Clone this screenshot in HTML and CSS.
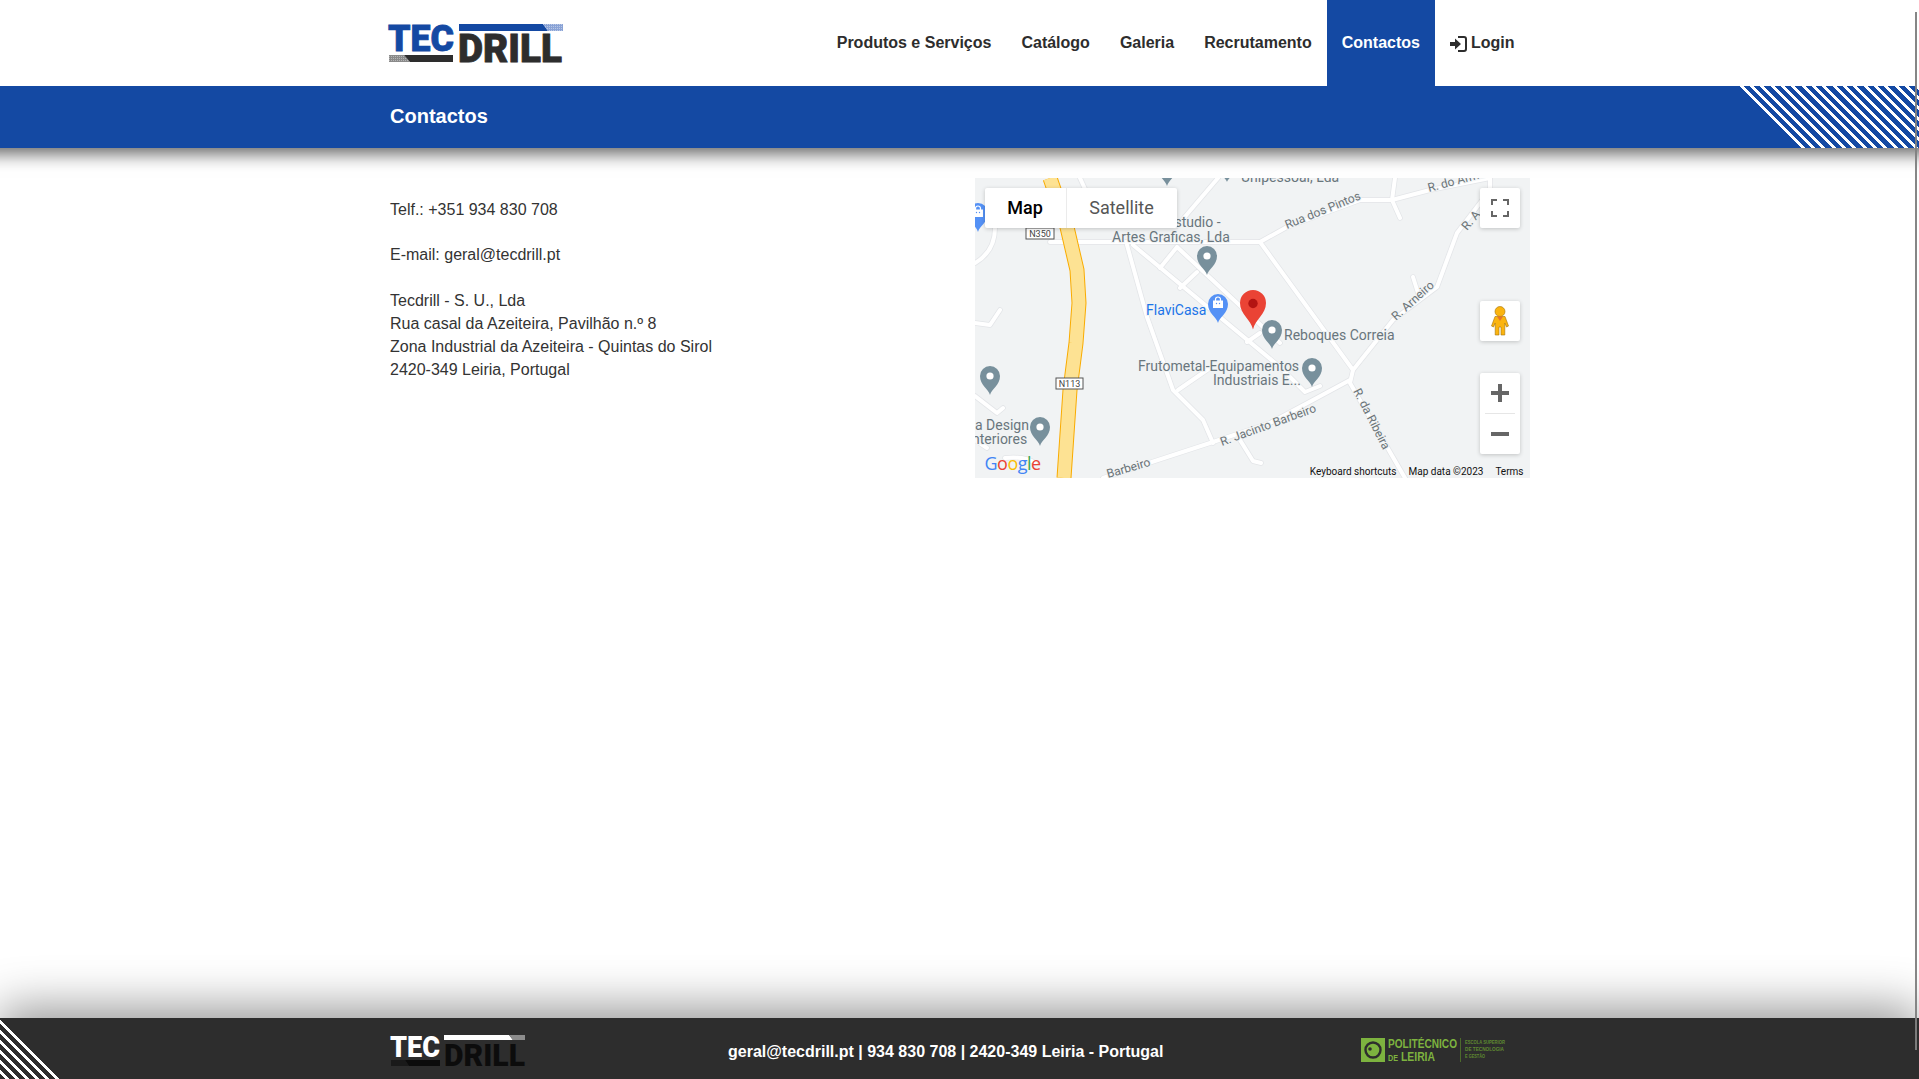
FILE: index.html
```html
<!DOCTYPE html>
<html lang="pt">
<head>
  <meta charset="UTF-8">
  <meta name="viewport" content="width=device-width, initial-scale=1.0">
  <title>Contactos - Tecdrill</title>
  <link rel="stylesheet" href="styles.css">
</head>
<body>

  <!-- Header -->
  <header class="site-header">
    <div class="container header-row">
      <a href="#" class="logo">
        <svg width="174" height="38" viewBox="0 0 174 38">
          <defs>
            <pattern id="hatchBlue" width="2" height="2" patternUnits="userSpaceOnUse">
              <rect width="2" height="2" fill="#8aa3d6"/>
              <rect width="1" height="1" fill="#b9c8e6"/>
            </pattern>
            <pattern id="hatchGrey" width="2" height="2" patternUnits="userSpaceOnUse">
              <rect width="2" height="2" fill="#8a8a8a"/>
              <rect width="1" height="1" fill="#b5b5b5"/>
            </pattern>
          </defs>
          <text class="logo-tec" x="-1" y="27" textLength="66" lengthAdjust="spacingAndGlyphs">TEC</text>
          <polygon points="70,0 154,0 159,7 70,7" fill="#1449a3"/>
          <polygon points="154,0 174,0 174,7 159,7" fill="url(#hatchBlue)"/>
          <text class="logo-drill" x="69" y="38" textLength="104" lengthAdjust="spacingAndGlyphs">DRILL</text>
          <polygon points="0,31 15,31 21,38 0,38" fill="url(#hatchGrey)"/>
          <polygon points="15,31 64,31 64,38 21,38" fill="#2d2d2d"/>
        </svg>
      </a>
      <nav class="main-nav">
        <a href="#">Produtos e Serviços</a>
        <a href="#">Catálogo</a>
        <a href="#">Galeria</a>
        <a href="#">Recrutamento</a>
        <a href="#" class="active">Contactos</a>
        <a href="#" class="login">
          <svg width="17" height="16" viewBox="0 0 17 16">
            <path d="M0 6H5V2.500L11 8 5 13.500V10H0z" fill="#2d2d2d"/>
            <path d="M8 1h6Q16 1 16 3v10q0 2-2 2H8" fill="none" stroke="#2d2d2d" stroke-width="2"/>
          </svg>
          Login
        </a>
      </nav>
    </div>
  </header>

  <!-- Page title -->
  <div class="title-bar">
    <div class="container">
      <h1>Contactos</h1>
    </div>
    <div class="title-stripes"></div>
  </div>

  <!-- Content -->
  <main class="container content-row">
    <div class="contact-info">
      <p>Telf.: +351 934 830 708</p>
      <p>E-mail: geral@tecdrill.pt</p>
      <p>Tecdrill - S. U., Lda<br>
      Rua casal da Azeiteira, Pavilhão n.º 8<br>
      Zona Industrial da Azeiteira - Quintas do Sirol<br>
      2420-349 Leiria, Portugal</p>
    </div>

    <div class="map">
      <svg class="map-canvas" width="555" height="300" viewBox="0 0 555 300">
        <defs>
          <path id="pin" d="M0 0C-1.500-6-10-10-10-19A10 10 0 0 1 10-19C10-10 1.500-6 0 0Z"/>
          <g id="placePin">
            <use href="#pin" fill="#78909c"/>
            <circle cy="-19" r="3.600" fill="#fff"/>
          </g>
          <g id="shopPin">
            <use href="#pin" fill="#5491f5"/>
            <path d="M-5-22.500h10v7.500h-10z" fill="#fff"/>
            <path d="M-2.500-22v-1.500a2.500 2.500 0 0 1 5 0v1.500" fill="none" stroke="#fff" stroke-width="1.200"/>
            <circle cx="-1.500" cy="-19.500" r=".7" fill="#5491f5"/>
            <circle cx="1.500" cy="-19.500" r=".7" fill="#5491f5"/>
          </g>
        </defs>

        <!-- minor roads -->
        <g class="roads-casing">
          <path d="M75 64H285L312 49 385 22H417L455 12 515 0"/>
          <path d="M417 22L425 40M417 22L420 0"/>
          <path d="M285 64L378 192 375 205 430 300"/>
          <path d="M378 192L418 142 462 109 482 55 515 12V0"/>
          <path d="M438 99L443 115"/>
          <path d="M128 300L235 265 295 245 338 222 375 202"/>
          <path d="M152 67L172 139 198 212 228 242 238 265"/>
          <path d="M158 67L305 189 330 214 345 208"/>
          <path d="M202 69L305 165"/>
          <path d="M185 90L202 69M205 110L222 94M272 164L285 155"/>
          <path d="M105 0L115 22M243 0L202 48"/>
          <path d="M0 85C12 78 20 68 20 50M0 145L15 147 25 132"/>
          <path d="M0 218L22 235 28 230M0 262L12 270M265 262L278 283 286 285"/>
          <path d="M203 212L235 190"/>
          <path d="M30 280Q50 278 60 285"/>
        </g>
        <g class="roads">
          <path d="M75 64H285L312 49 385 22H417L455 12 515 0"/>
          <path d="M417 22L425 40M417 22L420 0"/>
          <path d="M285 64L378 192 375 205 430 300"/>
          <path d="M378 192L418 142 462 109 482 55 515 12V0"/>
          <path d="M438 99L443 115"/>
          <path d="M128 300L235 265 295 245 338 222 375 202"/>
          <path d="M152 67L172 139 198 212 228 242 238 265"/>
          <path d="M158 67L305 189 330 214 345 208"/>
          <path d="M202 69L305 165"/>
          <path d="M185 90L202 69M205 110L222 94M272 164L285 155"/>
          <path d="M105 0L115 22M243 0L202 48"/>
          <path d="M0 85C12 78 20 68 20 50M0 145L15 147 25 132"/>
          <path d="M0 218L22 235 28 230M0 262L12 270M265 262L278 283 286 285"/>
          <path d="M203 212L235 190"/>
          <path d="M30 280Q50 278 60 285"/>
        </g>

        <!-- N113 -->
        <path class="main-road-edge" d="M75 0L92 49 102 92 104 125 101 165 95 212 89 300"/>
        <path class="main-road" d="M75 0L92 49 102 92 104 125 101 165 95 212 89 300"/>
        <g class="shield">
          <rect x="51" y="50" width="28" height="11"/>
          <text x="65" y="59">N350</text>
          <rect x="81" y="200" width="27" height="11"/>
          <text x="94.500" y="209">N113</text>
        </g>

        <!-- labels -->
        <g class="map-label">
          <text x="192" y="49">estudio -</text>
          <text x="137" y="64">Artes Graficas, Lda</text>
          <text x="163" y="193">Frutometal-Equipamentos</text>
          <text x="238" y="207">Industriais E...</text>
          <text x="309" y="162">Reboques Correia</text>
          <text x="0" y="252">a Design</text>
          <text x="-3" y="266">nteriores</text>
          <text x="266" y="4">Unipessoal, Lda</text>
        </g>
        <text class="map-label-blue" x="171" y="137">FlaviCasa</text>
        <g class="road-label">
          <text transform="translate(312 51) rotate(-22)">Rua dos Pintos</text>
          <text transform="translate(454 14) rotate(-15)">R. do Armaz</text>
          <text transform="translate(492 53) rotate(-50)">R. A</text>
          <text transform="translate(421 143) rotate(-42)">R. Arneiro</text>
          <text transform="translate(378 213) rotate(63)">R. da Ribeira</text>
          <text transform="translate(247 268) rotate(-20)">R. Jacinto Barbeiro</text>
          <text transform="translate(133 300) rotate(-16)">Barbeiro</text>
        </g>

        <!-- pins -->
        <use href="#placePin" x="192" y="8"/>
        <use href="#placePin" transform="translate(252 4) scale(.5)"/>
        <use href="#placePin" x="232" y="97"/>
        <use href="#placePin" x="297" y="171"/>
        <use href="#placePin" x="337" y="209"/>
        <use href="#placePin" x="15" y="217"/>
        <use href="#placePin" x="65" y="268"/>
        <use href="#shopPin" x="243" y="145"/>
        <use href="#shopPin" x="3" y="54"/>
        <g class="marker">
          <path d="M278 151.500C276 141.500 265 136.500 265 125A13 13 0 0 1 291 125C291 136.500 280 141.500 278 151.500Z" fill="#ea4335"/>
          <circle cx="278" cy="125.500" r="4.700" fill="#b31412"/>
        </g>
      </svg>

      <div class="map-type">
        <span class="map-type-btn selected">Map</span>
        <span class="map-type-btn">Satellite</span>
      </div>
      <div class="map-btn fullscreen-btn">
        <svg width="18" height="18" viewBox="0 0 18 18">
          <path d="M1 6V1H6M12 1H17V6M17 12V17H12M6 17H1V12" fill="none" stroke="#666" stroke-width="2"/>
        </svg>
      </div>
      <div class="map-btn pegman-btn">
        <svg width="18" height="30" viewBox="0 0 18 30">
          <circle cx="9" cy="5.500" r="5" fill="#fbb40f" stroke="#a5740c" stroke-width=".6"/>
          <path d="M4 10.500H14L17.500 20 15.500 21 13.800 17V29H10V21H8V29H4.200V17L2.500 21 .5 20Z" fill="#fbb40f" stroke="#a5740c" stroke-width=".6"/>
          <path d="M6 10.500H12L9 15Z" fill="#e8742a"/>
        </svg>
      </div>
      <div class="zoom-box">
        <div class="zoom-btn">
          <svg width="18" height="18" viewBox="0 0 18 18"><path d="M0 9H18M9 0V18" stroke="#666" stroke-width="4"/></svg>
        </div>
        <div class="zoom-line"></div>
        <div class="zoom-btn">
          <svg width="18" height="18" viewBox="0 0 18 18"><path d="M0 9H18" stroke="#666" stroke-width="4"/></svg>
        </div>
      </div>
      <div class="google-mark"><span class="g-blue">G</span><span class="g-red">o</span><span class="g-yellow">o</span><span class="g-blue">g</span><span class="g-green">l</span><span class="g-red">e</span></div>
      <div class="map-attr">
        <span>Keyboard shortcuts</span>
        <span>Map data ©2023</span>
        <span>Terms</span>
      </div>
    </div>
  </main>

  <!-- Footer -->
  <footer class="site-footer">
    <div class="footer-stripes"></div>
    <div class="container footer-row">
      <svg class="footer-logo" width="134" height="31" viewBox="0 0 134 31">
        <text class="foot-tec" x="-1" y="22" textLength="50" lengthAdjust="spacingAndGlyphs">TEC</text>
        <polygon points="53,0 118,0 122,5 53,5" fill="#fff"/>
        <polygon points="118,0 134,0 134,5 122,5" fill="#8c8c8c"/>
        <text class="foot-drill" x="53" y="31" textLength="81" lengthAdjust="spacingAndGlyphs">DRILL</text>
        <polygon points="0,25 14,25 18,31 0,31" fill="#1a1a1a"/>
        <polygon points="14,25 49,25 49,31 18,31" fill="#0c0c0c"/>
      </svg>
      <p class="footer-text">geral@tecdrill.pt | 934 830 708 | 2420-349 Leiria - Portugal</p>
      <svg class="school-logo" width="146" height="26" viewBox="0 0 146 26">
        <rect x="1" y="1" width="24" height="24" fill="#7db33f"/>
        <circle cx="13" cy="13" r="7.500" fill="none" stroke="#2d2d2d" stroke-width="2.400"/>
        <circle cx="10" cy="12" r="1.800" fill="#2d2d2d"/>
        <text class="school-big" x="28" y="11" textLength="69" lengthAdjust="spacingAndGlyphs">POLITÉCNICO</text>
        <text class="school-small" x="28" y="24" textLength="10" lengthAdjust="spacingAndGlyphs">DE</text>
        <text class="school-big" x="41" y="24" textLength="34" lengthAdjust="spacingAndGlyphs">LEIRIA</text>
        <rect x="100" y="1" width="1" height="24" fill="#4c6a2c"/>
        <text class="school-tiny" x="105" y="7" textLength="40" lengthAdjust="spacingAndGlyphs">ESCOLA SUPERIOR</text>
        <text class="school-tiny" x="105" y="14" textLength="39" lengthAdjust="spacingAndGlyphs">DE TECNOLOGIA</text>
        <text class="school-tiny" x="105" y="21" textLength="20" lengthAdjust="spacingAndGlyphs">E GESTÃO</text>
      </svg>
    </div>
  </footer>

  <!-- Overlay scrollbar -->
  <div class="scroll-thumb"></div>

</body>
</html>
```

FILE: styles.css
```css
html, body {
  height: 100%;
}

body {
  margin: 0;
  font-family: "Liberation Sans", Arial, sans-serif;
  font-size: 16px;
  line-height: 1.42857;
  color: #333;
  background-color: white;
  display: flex;
  flex-direction: column;
  overflow: hidden;
}

.container {
  box-sizing: border-box;
  width: 1140px;
  margin: 0 auto;
  padding-left: 0.5px;
}

/* Header */
.site-header {
  position: relative;
  z-index: 2;
  height: 86px;
  flex: none;
  background-color: white;
}

.header-row {
  display: flex;
  justify-content: space-between;
  align-items: stretch;
  height: 86px;
}

.logo {
  display: block;
  margin-top: 24px;
  margin-left: -1px;
  height: 38px;
}

.logo svg {
  display: block;
  overflow: visible;
}

.logo-tec {
  font-family: Roboto, sans-serif;
  font-weight: 900;
  font-size: 37px;
  fill: #1449a3;
  stroke: #1449a3;
  stroke-width: 0.8px;
}

.logo-drill {
  font-family: Roboto, sans-serif;
  font-weight: 900;
  font-size: 39px;
  fill: #2d2d2d;
  stroke: #2d2d2d;
  stroke-width: 0.8px;
}

.main-nav {
  display: flex;
}

.main-nav a {
  display: flex;
  align-items: center;
  padding: 1px 15px 0;
  font-weight: bold;
  color: #2d2d2d;
  text-decoration: none;
}

.main-nav a.active {
  background-color: #1449a3;
  color: white;
}

.main-nav .login svg {
  margin-right: 4px;
}

/* Title bar */
.title-bar {
  position: relative;
  z-index: 1;
  flex: none;
  height: 62px;
  background-color: #1449a3;
}

/* wider than the window so the shadow does not fade at the sides */
.title-bar::after {
  content: "";
  position: absolute;
  top: 0;
  bottom: 0;
  left: -40px;
  right: -40px;
  z-index: -1;
  box-shadow: 0 6px 16px rgba(0, 0, 0, 0.6);
}

.title-bar h1 {
  margin: 0;
  font-size: 20px;
  line-height: 60px;
  color: white;
}

.title-stripes {
  position: absolute;
  top: 0;
  right: 0;
  width: 180px;
  height: 62px;
  background-image: repeating-linear-gradient(45deg, white 0, white 3px, #1449a3 3px, #1449a3 7.307px);
  clip-path: polygon(0 0, 100% 0, 100% 100%, 62px 100%);
}

/* Content */
.content-row {
  flex: 1;
  display: flex;
  justify-content: space-between;
  align-items: flex-start;
  padding-top: 30px;
}

.contact-info {
  padding-top: 20.6px;
}

.contact-info p {
  margin: 0 0 23px;
}

/* Map */
.map {
  position: relative;
  width: 555px;
  height: 300px;
  overflow: hidden;
  background-color: #f1f3f4;
  font-family: Roboto, sans-serif;
}

.map-canvas {
  display: block;
}

.roads-casing path {
  fill: none;
  stroke: #e3e5e8;
  stroke-width: 5.5px;
  stroke-linecap: round;
  stroke-linejoin: round;
}

.roads path {
  fill: none;
  stroke: white;
  stroke-width: 4px;
  stroke-linecap: round;
  stroke-linejoin: round;
}

.main-road-edge {
  fill: none;
  stroke: #f9ab00;
  stroke-width: 15px;
}

.main-road {
  fill: none;
  stroke: #fde293;
  stroke-width: 13px;
}

.shield rect {
  fill: white;
  stroke: #555;
  stroke-width: 1px;
}

.shield text {
  font-size: 9px;
  fill: #444;
  text-anchor: middle;
}

.map-label text {
  font-size: 14px;
  fill: #69767d;
  paint-order: stroke;
  stroke: #f1f3f4;
  stroke-width: 2px;
}

.map-label-blue {
  font-size: 14px;
  fill: #1a73e8;
  paint-order: stroke;
  stroke: #f1f3f4;
  stroke-width: 2px;
}

.road-label text {
  font-size: 12px;
  fill: #6b7378;
  paint-order: stroke;
  stroke: #f1f3f4;
  stroke-width: 2px;
}

.map-type {
  position: absolute;
  top: 10px;
  left: 10px;
  display: flex;
  height: 40px;
  border-radius: 2px;
  background-color: white;
  box-shadow: 0 1px 4px rgba(0, 0, 0, 0.2);
}

.map-type-btn {
  display: flex;
  align-items: center;
  justify-content: center;
  padding-bottom: 1px;
  font-size: 18px;
  color: #565656;
  width: 110px;
  border-left: 1px solid #ebebeb;
}

.map-type-btn.selected {
  width: 81px;
  border-left: none;
  font-weight: 500;
  color: black;
}

.map-btn {
  position: absolute;
  left: 505px;
  width: 40px;
  height: 40px;
  display: flex;
  align-items: center;
  justify-content: center;
  background-color: white;
  border-radius: 2px;
  box-shadow: 0 1px 4px rgba(0, 0, 0, 0.2);
}

.fullscreen-btn {
  top: 10px;
}

.pegman-btn {
  top: 123px;
}

.zoom-box {
  position: absolute;
  top: 195px;
  left: 505px;
  width: 40px;
  height: 81px;
  background-color: white;
  border-radius: 2px;
  box-shadow: 0 1px 4px rgba(0, 0, 0, 0.2);
}

.zoom-btn {
  height: 40px;
  display: flex;
  align-items: center;
  justify-content: center;
}

.zoom-line {
  height: 1px;
  margin: 0 5px;
  background-color: #e6e6e6;
}

.google-mark {
  position: absolute;
  left: 10px;
  bottom: 4px;
  font-family: "Open Sans", sans-serif;
  font-size: 18px;
  font-weight: 400;
  line-height: 22px;
  letter-spacing: -0.5px;
}

.g-blue { color: #4285f4; }
.g-red { color: #ea4335; }
.g-yellow { color: #fbbc05; }
.g-green { color: #34a853; }

.map-attr {
  position: absolute;
  right: 6px;
  bottom: -1px;
  display: flex;
  gap: 12px;
  font-size: 10px;
  line-height: 14px;
  color: #111;
}

/* Footer */
.site-footer {
  position: relative;
  flex: none;
  height: 61px;
  background-color: #2d2d2d;
  box-shadow: 0 -10px 48px rgba(0, 0, 0, 0.42);
}

.footer-stripes {
  position: absolute;
  left: 0;
  top: 1px;
  width: 60px;
  height: 60px;
  background-image: repeating-linear-gradient(45deg, #2d2d2d 0, #2d2d2d 4.07px, white 4.07px, white 7.07px);
  clip-path: polygon(0 0, 100% 100%, 0 100%);
}

.footer-row {
  position: relative;
  height: 61px;
  display: flex;
  align-items: center;
}

.footer-logo {
  flex: none;
  margin-left: 1px;
  margin-top: 3px;
  overflow: visible;
}

.footer-text {
  margin: 8px 0 0 203px;
  font-weight: bold;
  color: white;
  white-space: nowrap;
}

.school-logo {
  flex: none;
  margin-left: auto;
  margin-right: 24px;
  margin-top: 3px;
}

.foot-tec {
  font-family: Roboto, sans-serif;
  font-weight: 900;
  font-size: 29px;
  fill: white;
}

.foot-drill {
  font-family: Roboto, sans-serif;
  font-weight: 900;
  font-size: 31px;
  fill: #0c0c0c;
}

.school-big {
  font-family: "Liberation Sans", sans-serif;
  font-size: 13px;
  font-weight: bold;
  fill: #7db33f;
}

.school-small {
  font-family: "Liberation Sans", sans-serif;
  font-size: 9px;
  font-weight: bold;
  fill: #7db33f;
}

.school-tiny {
  font-family: "Liberation Sans", sans-serif;
  font-size: 5px;
  font-weight: bold;
  fill: #5f8a31;
}

/* Overlay scrollbar */
.scroll-thumb {
  position: fixed;
  top: 12px;
  left: 1915px;
  width: 2px;
  height: 1038px;
  background-color: rgba(128, 128, 128, 0.95);
  z-index: 5;
}
```
